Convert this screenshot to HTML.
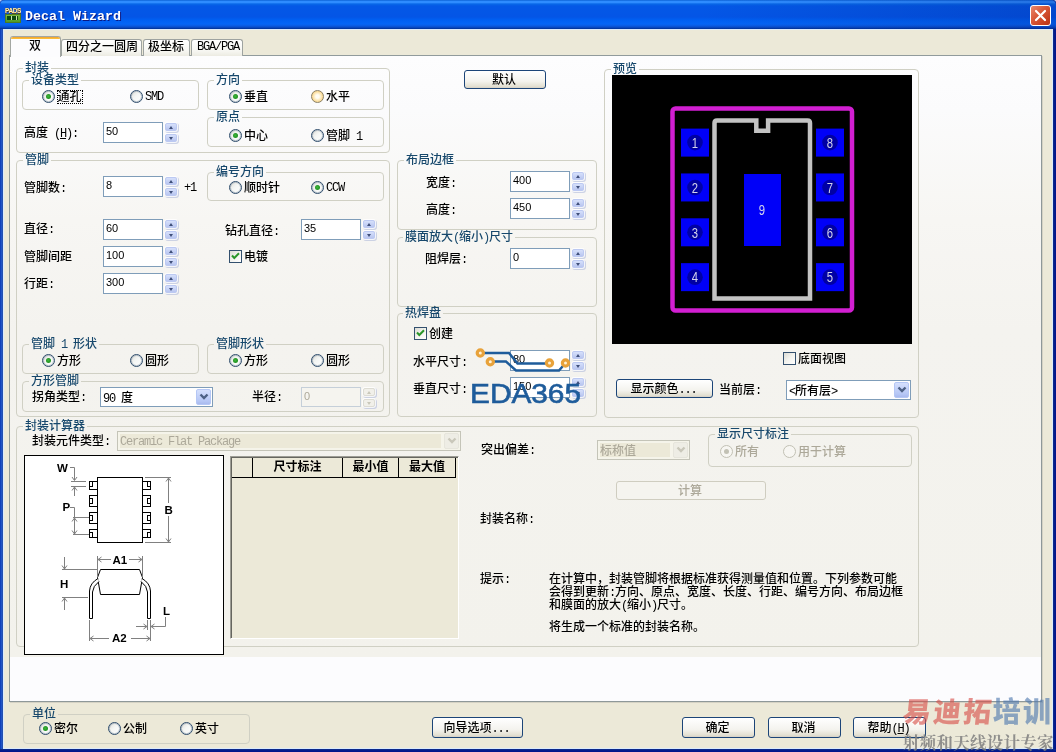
<!DOCTYPE html><html lang="zh-CN"><head><meta charset="utf-8"><title>Decal Wizard</title><style>
*{box-sizing:border-box;margin:0;padding:0}
html,body{width:1056px;height:752px;overflow:hidden;background:#C8DCF8}
body{position:relative;font-family:"Liberation Sans","Noto Sans CJK SC",sans-serif;font-size:12px;color:#000;line-height:12px;font-weight:500;will-change:transform}
.a{position:absolute}
.t{position:absolute;white-space:nowrap;height:12px;line-height:12px;font-size:12px;margin:1px 0 0 -1px}
.m{font-family:"Liberation Mono","Noto Sans CJK SC",monospace;letter-spacing:-1.2px;white-space:pre}
.pg{background:linear-gradient(to bottom,#FDFDFE 0px,#FBFBFC 54px,#F7F6F3 164px,#F4F3EF 274px,#F3F2EC 601px)}
.gb{position:absolute;border:1px solid #D0D0C4;border-radius:4px}
.gl{position:absolute;white-space:nowrap;height:12px;line-height:12px;color:#17486C;padding:0 2px}
.in{position:absolute;border:1px solid #7F9DB9;background:#fff;font-size:11px;line-height:17px;padding-left:2px;white-space:nowrap}
.in.dis{background:#F5F4EF;border-color:#C5CFD9;color:#ACA899}
.sp{position:absolute;width:13px;height:21px}
.sp i{position:absolute;left:0;width:12px;height:8px;border:1px solid #BCC9F2;border-radius:2px;background:linear-gradient(to bottom,#D6E0FB,#B9C6F0);box-shadow:0 0 0 1px rgba(255,255,255,.8),1px 1px 0 1px rgba(170,180,215,.55)}
.sp i:first-child{top:1px}.sp i:last-child{top:12px}
.sp i:before{content:"";position:absolute;left:2.500px;top:1.500px;border-left:2.5px solid transparent;border-right:2.5px solid transparent}
.sp i:first-child:before{border-bottom:3px solid #3F4F7A}
.sp i:last-child:before{border-top:3px solid #3F4F7A}
.sp.dis i{background:#F1F0EA;border-color:#DDDCD3}
.sp.dis i:first-child:before{border-bottom-color:#C9C7BA}
.sp.dis i:last-child:before{border-top-color:#C9C7BA}
.rd{position:absolute;width:13px;height:13px;border-radius:50%;border:1px solid #2F4D6C;box-shadow:inset 0 0 0 1px rgba(47,77,108,.28);background:linear-gradient(135deg,#DCDCD6 0%,#F4F6F4 45%,#FFFFFF 100%)}
.rd.on:after{content:"";position:absolute;left:3px;top:3px;width:5px;height:5px;border-radius:50%;background:radial-gradient(circle at 45% 45%,#3FB83C,#229322 60%,#5DBF5A 100%)}
.rd.hot{background:radial-gradient(circle,#FFFDF4 22%,#FCE4AC 55%,#F2BE5E 100%);border-color:#8A8166;box-shadow:none}
.rd.dis{border-color:#C2C1B4;background:#F7F6F2;box-shadow:none}
.rd.dis.on:after{background:#C2C1B4}
.cb{position:absolute;width:13px;height:13px;border:1px solid #33506E;background:linear-gradient(135deg,#DBDBD4 0%,#F3F3EF 50%,#FFFFFF 100%)}
.btn{position:absolute;border:1px solid #1C4578;border-radius:3px;background:linear-gradient(to bottom,#FFFFFF 0%,#F4F3EE 60%,#E3E0D2 90%,#D6D0C5 100%);text-align:center;white-space:nowrap;font-size:12px;line-height:20px;padding-right:2px}
.btn.dis{border-color:#CFCDC0;background:#F5F4EF;color:#ACA899}
.cmb{position:absolute;border:1px solid #7F9DB9;background:#fff;line-height:17px;padding-left:2px;padding-top:2px;white-space:nowrap}
.cmb b{position:absolute;right:1px;top:1px;bottom:1px;width:15px;border:1px solid #B5C7F5;border-radius:2px;background:linear-gradient(to bottom,#D5E0FD,#B5C6F5 80%,#A9BAEE)}
.cmb b svg{position:absolute;left:1.500px;top:3px}
.cmb.dis{background:linear-gradient(#ECE9D8,#ECE9D8) 2px 2px / calc(100% - 21px) calc(100% - 4px) no-repeat,#F5F4EA;border-color:#C4C4B8;color:#ACA899;padding-top:2px}
.cmb.dis b{background:#EEEDE5;border-color:#E6E5DC}
.tab{position:absolute;top:39px;height:17px;border:1px solid #9EA3A0;border-bottom:none;border-radius:3px 3px 0 0;background:linear-gradient(to bottom,#FFFFFF,#F6F6F1 70%,#ECEBE2);line-height:15px;white-space:nowrap;padding-left:5px}
</style></head><body>
<div class="a" style="left:0;top:0;width:1056px;height:752px;background:#00138C;border-radius:5px 5px 0 0"></div>
<div class="a" style="left:0;top:0;width:3px;height:752px;border-radius:5px 0 0 0;background:linear-gradient(to right,#0838B4,#2A5FCB 70%,#1C3E90)"></div>
<div class="a" style="left:1053px;top:0;width:3px;height:752px;border-radius:0 5px 0 0;background:linear-gradient(to right,#10308A,#041C8C 50%,#00138C)"></div>
<div class="a" style="left:0;top:749px;width:1056px;height:3px;background:linear-gradient(to bottom,#10308A,#041C8C 50%,#00138C)"></div>
<div class="a" style="left:0;top:0;width:1056px;height:29px;border-radius:5px 5px 0 0;background:linear-gradient(to bottom,#0054C8 0px,#2E8CFF 1px,#2E8CFF 2.500px,#0868E8 4px,#0458E6 6px,#0455E6 17px,#0060F2 20px,#0566F6 24px,#0A5AE0 26px,#0848C0 27.500px,#002F90 29px)"></div>
<div class="a" style="left:700px;top:0;width:356px;height:29px;border-radius:0 5px 0 0;background:linear-gradient(to right,rgba(0,20,120,0),rgba(0,20,120,.22))"></div>
<div class="a" style="left:3px;top:29px;width:1050px;height:720px;background:#ECE9D8;border:1px solid #DCEBFB"></div>
<div class="a" style="left:5px;top:7px;width:16px;height:16px;overflow:hidden"><div class="a" style="left:0;top:0;width:16px;height:7px;color:#FFF0B4;font:bold 6.500px/7px 'Liberation Sans',sans-serif;letter-spacing:-.4px;text-align:center;text-shadow:0 0 1px #6A4A10,0 1px 0 #6A4A10">PADS</div><div class="a" style="left:0;top:7px;width:16px;height:9px;background:linear-gradient(to bottom,#7DBA3C,#4E9A28);border:1px solid #4C7A22"></div><div class="a" style="left:2px;top:9px;width:11px;height:4px;background:#0C4A10"></div><div class="a" style="left:6px;top:9px;width:1px;height:4px;background:#CFE8B0"></div><div class="a" style="left:11px;top:9px;width:1px;height:4px;background:#CFE8B0"></div></div>
<div class="a" style="left:25px;top:9px;height:16px;line-height:16px;font:bold 13.33px/16px 'Liberation Mono',monospace;color:#fff;text-shadow:1px 1px 0 #0A1883;white-space:nowrap">Decal Wizard</div>
<div class="a" style="left:1030px;top:5px;width:21px;height:21px;border:1px solid #fff;border-radius:3px;background:linear-gradient(135deg,#E9896E 0%,#DA5B3B 40%,#C53E1F 80%,#B7351A 100%)"><svg class="a" style="left:0;top:0" width="19" height="19" viewBox="0 0 19 19"><path d="M5 5 L14 14 M14 5 L5 14" stroke="#fff" stroke-width="2.2" stroke-linecap="round"/></svg></div>
<div class="a" style="left:9px;top:55px;width:1033px;height:647px;border:1px solid #919B9C;border-right-color:#8E9899;border-bottom-color:#8E9899;background:#FCFCFE;box-shadow:1px 1px 0 #D5D2C4"></div>
<div class="a pg" style="left:10px;top:56px;width:1031px;height:601px"></div>
<div class="tab" style="left:61px;width:81px;padding-left:4px">四分之一圆周</div>
<div class="tab" style="left:143px;width:47px;padding-left:4px">极坐标</div>
<div class="tab m" style="left:191px;width:52px;padding-left:5px">BGA/PGA</div>
<div class="a" style="left:10px;top:36px;width:51px;height:21px;border:1px solid #A3A7A3;border-bottom:none;border-radius:3px 3px 0 0;background:#FCFCFE;overflow:hidden"><div class="a" style="left:-1px;top:-1px;width:51px;height:3px;background:linear-gradient(to bottom,#E68B2C,#FFC73C);border-radius:3px 3px 0 0"></div><div class="t" style="left:19px;top:2px">双</div></div>
<div class="gb" style="left:16px;top:68px;width:374px;height:85px"></div>
<div class="gl" style="left:23px;top:62px;background:#FDFDFE">封装</div>
<div class="gb" style="left:22px;top:80px;width:177px;height:30px"></div>
<div class="gl" style="left:29px;top:74px;background:#FCFCFD">设备类型</div>
<div class="rd on" style="left:42px;top:90px"></div>
<div class="a" style="left:56.5px;top:89.5px;width:26.500px;height:14.500px;border:1px dotted #000"></div>
<div class="t " style="left:58.5px;top:90px;">通孔</div>
<div class="rd" style="left:130px;top:90px"></div>
<div class="t m" style="left:146px;top:90px;">SMD</div>
<div class="t " style="left:25px;top:126px;">高度<span class="m"> (<u>H</u>):</span></div>
<div class="in" style="left:103px;top:122px;width:60px;height:21px">50</div>
<div class="sp" style="left:165px;top:122px"><i></i><i></i></div>
<div class="gb" style="left:207px;top:80px;width:177px;height:30px"></div>
<div class="gl" style="left:214px;top:74px;background:#FCFCFD">方向</div>
<div class="rd on" style="left:229px;top:90px"></div>
<div class="t " style="left:245px;top:90px;">垂直</div>
<div class="rd hot" style="left:311px;top:90px"></div>
<div class="t " style="left:327px;top:90px;">水平</div>
<div class="gb" style="left:207px;top:117px;width:177px;height:30px"></div>
<div class="gl" style="left:214px;top:111px;background:#FBFBFB">原点</div>
<div class="rd on" style="left:229px;top:129px"></div>
<div class="t " style="left:245px;top:129px;">中心</div>
<div class="rd" style="left:311px;top:129px"></div>
<div class="t " style="left:327px;top:129px;">管脚<span class="m"> 1</span></div>
<div class="gb" style="left:16px;top:160px;width:374px;height:257px"></div>
<div class="gl" style="left:23px;top:154px;background:#F9F9F8">管脚</div>
<div class="t " style="left:25px;top:181px;">管脚数<span class="m">:</span></div>
<div class="in" style="left:103px;top:176px;width:60px;height:21px">8</div>
<div class="sp" style="left:165px;top:176px"><i></i><i></i></div>
<div class="t m" style="left:185px;top:181px;">+1</div>
<div class="gb" style="left:207px;top:172px;width:177px;height:29px"></div>
<div class="gl" style="left:214px;top:166px;background:#F9F8F7">编号方向</div>
<div class="rd" style="left:229px;top:181px"></div>
<div class="t " style="left:245px;top:181px;">顺时针</div>
<div class="rd on" style="left:311px;top:181px"></div>
<div class="t m" style="left:327px;top:181px;">CCW</div>
<div class="t " style="left:25px;top:222px;">直径<span class="m">:</span></div>
<div class="in" style="left:103px;top:219px;width:60px;height:21px">60</div>
<div class="sp" style="left:165px;top:219px"><i></i><i></i></div>
<div class="t " style="left:226px;top:224px;">钻孔直径<span class="m">:</span></div>
<div class="in" style="left:301px;top:219px;width:60px;height:21px">35</div>
<div class="sp" style="left:363px;top:219px"><i></i><i></i></div>
<div class="t " style="left:25px;top:250px;">管脚间距</div>
<div class="in" style="left:103px;top:246px;width:60px;height:21px">100</div>
<div class="sp" style="left:165px;top:246px"><i></i><i></i></div>
<div class="cb" style="left:229px;top:250px"><svg class="a" style="left:0;top:0" width="11" height="11" viewBox="0 0 11 11"><path d="M2 4.5 L4.3 7 L9 2.2" fill="none" stroke="#2A962A" stroke-width="2"/></svg></div>
<div class="t " style="left:245px;top:250px;">电镀</div>
<div class="t " style="left:25px;top:277px;">行距<span class="m">:</span></div>
<div class="in" style="left:103px;top:273px;width:60px;height:21px">300</div>
<div class="sp" style="left:165px;top:273px"><i></i><i></i></div>
<div class="gb" style="left:22px;top:344px;width:177px;height:30px"></div>
<div class="gl" style="left:29px;top:338px;background:#F4F3EF">管脚<span class="m"> 1 </span>形状</div>
<div class="rd on" style="left:42px;top:354px"></div>
<div class="t " style="left:58px;top:354px;">方形</div>
<div class="rd" style="left:130px;top:354px"></div>
<div class="t " style="left:146px;top:354px;">圆形</div>
<div class="gb" style="left:207px;top:344px;width:177px;height:30px"></div>
<div class="gl" style="left:214px;top:338px;background:#F4F3EF">管脚形状</div>
<div class="rd on" style="left:229px;top:354px"></div>
<div class="t " style="left:245px;top:354px;">方形</div>
<div class="rd" style="left:311px;top:354px"></div>
<div class="t " style="left:327px;top:354px;">圆形</div>
<div class="gb" style="left:22px;top:381px;width:362px;height:31px"></div>
<div class="gl" style="left:29px;top:375px;background:#F4F3EF">方形管脚</div>
<div class="t " style="left:33px;top:390px;">拐角类型<span class="m">:</span></div>
<div class="cmb" style="left:100px;top:387px;width:113px;height:20px"><span class="m">90 </span>度<b><svg width="10" height="8" viewBox="0 0 10 8"><path d="M1.5 1.5 L5 5 L8.5 1.5" fill="none" stroke="#4D6185" stroke-width="2.400"/></svg></b></div>
<div class="t " style="left:253px;top:390px;">半径<span class="m">:</span></div>
<div class="in dis" style="left:301px;top:387px;width:60px;height:20px">0</div>
<div class="sp dis" style="left:363px;top:387px"><i></i><i></i></div>
<div class="btn" style="left:464px;top:70px;width:82px;height:19px;line-height:18px">默认</div>
<div class="gb" style="left:397px;top:160px;width:200px;height:70px"></div>
<div class="gl" style="left:404px;top:154px;background:#F9F9F8">布局边框</div>
<div class="t " style="left:427px;top:176px;">宽度<span class="m">:</span></div>
<div class="in" style="left:510px;top:171px;width:60px;height:21px">400</div>
<div class="sp" style="left:572px;top:171px"><i></i><i></i></div>
<div class="t " style="left:427px;top:203px;">高度<span class="m">:</span></div>
<div class="in" style="left:510px;top:198px;width:60px;height:21px">450</div>
<div class="sp" style="left:572px;top:198px"><i></i><i></i></div>
<div class="gb" style="left:397px;top:237px;width:200px;height:70px"></div>
<div class="gl" style="left:403px;top:231px;background:#F7F6F2">膜面放大<span class="m">(</span>缩小<span class="m">)</span>尺寸</div>
<div class="t " style="left:426px;top:252px;">阻焊层<span class="m">:</span></div>
<div class="in" style="left:510px;top:248px;width:60px;height:21px">0</div>
<div class="sp" style="left:572px;top:248px"><i></i><i></i></div>
<div class="gb" style="left:397px;top:313px;width:200px;height:104px"></div>
<div class="gl" style="left:403px;top:307px;background:#F4F3F0">热焊盘</div>
<div class="cb" style="left:414px;top:327px"><svg class="a" style="left:0;top:0" width="11" height="11" viewBox="0 0 11 11"><path d="M2 4.5 L4.3 7 L9 2.2" fill="none" stroke="#2A962A" stroke-width="2"/></svg></div>
<div class="t " style="left:430px;top:327px;">创建</div>
<div class="t " style="left:414px;top:355px;">水平尺寸<span class="m">:</span></div>
<div class="in" style="left:510px;top:350px;width:60px;height:21px">80</div>
<div class="sp" style="left:572px;top:350px"><i></i><i></i></div>
<div class="t " style="left:414px;top:382px;">垂直尺寸<span class="m">:</span></div>
<div class="in" style="left:510px;top:377px;width:60px;height:21px">150</div>
<div class="sp" style="left:572px;top:377px"><i></i><i></i></div>
<svg class="a" style="left:470px;top:345px" width="120" height="62" viewBox="0 0 120 62"><g fill="none" stroke="#1E5C9B" stroke-width="2.400"><path d="M10 8 H39 L47.5 18.5 H79"/><path d="M20 16.5 H36 L46 25.5 H89 L95.5 18"/></g><g fill="#FFF1D6" stroke="#E8A23A" stroke-width="3.200"><circle cx="10.300" cy="8" r="3.100"/><circle cx="20.300" cy="16.800" r="3.100"/><circle cx="79.500" cy="18" r="3.100"/><circle cx="95.500" cy="18" r="3.100"/></g><text x="0" y="57.800" font-family="Liberation Sans,sans-serif" font-size="28" fill="#1E5C9B" stroke="#1E5C9B" stroke-width=".600" textLength="111" lengthAdjust="spacingAndGlyphs">EDA365</text></svg>
<div class="gb" style="left:604px;top:69px;width:315px;height:349px"></div>
<div class="gl" style="left:611px;top:63px;background:#FDFDFE">预览</div>
<svg class="a" style="left:612px;top:75px" width="300" height="269" viewBox="0 0 300 269"><rect width="300" height="269" fill="#000"/><rect x="60.5" y="33.500" width="179.5" height="202" rx="3" fill="none" stroke="#D21FD2" stroke-width="4.5"/><path d="M102.5 223.500 V48 Q102.500 45.500 105 45.500 H144.300 V55.700 H156.100 V45.500 H195.500 Q198 45.500 198 48 V223.500 Z" fill="none" stroke="#C3C3C3" stroke-width="4.500"/><rect x="69" y="53.6" width="28" height="28" fill="#0000F8"/><circle cx="83" cy="67.6" r="7.800" fill="#0000A4"/><text x="83" y="72.9" text-anchor="middle" font-family="Liberation Sans,sans-serif" font-size="14.500" textLength="6.300" lengthAdjust="spacingAndGlyphs" fill="#D4D4EC">1</text><rect x="69" y="98.45" width="28" height="28" fill="#0000F8"/><circle cx="83" cy="112.45" r="7.800" fill="#0000A4"/><text x="83" y="117.75" text-anchor="middle" font-family="Liberation Sans,sans-serif" font-size="14.500" textLength="6.300" lengthAdjust="spacingAndGlyphs" fill="#D4D4EC">2</text><rect x="69" y="143.3" width="28" height="28" fill="#0000F8"/><circle cx="83" cy="157.3" r="7.800" fill="#0000A4"/><text x="83" y="162.6" text-anchor="middle" font-family="Liberation Sans,sans-serif" font-size="14.500" textLength="6.300" lengthAdjust="spacingAndGlyphs" fill="#D4D4EC">3</text><rect x="69" y="188.15" width="28" height="28" fill="#0000F8"/><circle cx="83" cy="202.15" r="7.800" fill="#0000A4"/><text x="83" y="207.45" text-anchor="middle" font-family="Liberation Sans,sans-serif" font-size="14.500" textLength="6.300" lengthAdjust="spacingAndGlyphs" fill="#D4D4EC">4</text><rect x="204" y="53.6" width="28" height="28" fill="#0000F8"/><circle cx="218" cy="67.6" r="7.800" fill="#0000A4"/><text x="218" y="72.9" text-anchor="middle" font-family="Liberation Sans,sans-serif" font-size="14.500" textLength="6.300" lengthAdjust="spacingAndGlyphs" fill="#D4D4EC">8</text><rect x="204" y="98.45" width="28" height="28" fill="#0000F8"/><circle cx="218" cy="112.45" r="7.800" fill="#0000A4"/><text x="218" y="117.75" text-anchor="middle" font-family="Liberation Sans,sans-serif" font-size="14.500" textLength="6.300" lengthAdjust="spacingAndGlyphs" fill="#D4D4EC">7</text><rect x="204" y="143.3" width="28" height="28" fill="#0000F8"/><circle cx="218" cy="157.3" r="7.800" fill="#0000A4"/><text x="218" y="162.6" text-anchor="middle" font-family="Liberation Sans,sans-serif" font-size="14.500" textLength="6.300" lengthAdjust="spacingAndGlyphs" fill="#D4D4EC">6</text><rect x="204" y="188.15" width="28" height="28" fill="#0000F8"/><circle cx="218" cy="202.15" r="7.800" fill="#0000A4"/><text x="218" y="207.45" text-anchor="middle" font-family="Liberation Sans,sans-serif" font-size="14.500" textLength="6.300" lengthAdjust="spacingAndGlyphs" fill="#D4D4EC">5</text><rect x="132" y="99" width="37" height="72" fill="#0000F8"/><text x="150" y="140" text-anchor="middle" font-family="Liberation Sans,sans-serif" font-size="14.500" textLength="6.300" lengthAdjust="spacingAndGlyphs" fill="#D4D4EC">9</text></svg>
<div class="cb" style="left:783px;top:352px"></div>
<div class="t " style="left:799px;top:352px;">底面视图</div>
<div class="btn" style="left:616px;top:379px;width:97px;height:19px;line-height:18px">显示颜色<span class="m">...</span></div>
<div class="t " style="left:720px;top:383px;">当前层<span class="m">:</span></div>
<div class="cmb" style="left:786px;top:380px;width:125px;height:20px"><span class="m">&lt;</span>所有层<span class="m">&gt;</span><b><svg width="10" height="8" viewBox="0 0 10 8"><path d="M1.5 1.5 L5 5 L8.5 1.5" fill="none" stroke="#4D6185" stroke-width="2.400"/></svg></b></div>
<div class="gb" style="left:16px;top:426px;width:903px;height:221px"></div>
<div class="gl" style="left:23px;top:420px;background:#F4F3EE">封装计算器</div>
<div class="t " style="left:33px;top:434px;">封装元件类型<span class="m">:</span></div>
<div class="cmb dis m" style="left:117px;top:431px;width:344px;height:20px">Ceramic Flat Package<b><svg width="10" height="8" viewBox="0 0 10 8"><path d="M1.5 1.5 L5 5 L8.5 1.5" fill="none" stroke="#C9C7BA" stroke-width="2.400"/></svg></b></div>
<svg class="a" style="left:24px;top:455px" width="200" height="200" viewBox="0 0 200 200"><rect x=".5" y=".5" width="199" height="199" fill="#fff" stroke="#000"/><g fill="#fff" stroke="#000" stroke-width="1"><rect x="73.500" y="22.500" width="45" height="65"/><rect x="65.500" y="26.5" width="8" height="8"/><rect x="65.500" y="26.5" width="3" height="5"/><rect x="118.500" y="26.5" width="8" height="8"/><rect x="123.500" y="26.5" width="3" height="5"/><rect x="65.500" y="40.5" width="8" height="11"/><rect x="65.500" y="43.5" width="3" height="5"/><rect x="118.500" y="40.5" width="8" height="11"/><rect x="123.500" y="43.5" width="3" height="5"/><rect x="65.500" y="57.5" width="8" height="11"/><rect x="65.500" y="60.5" width="3" height="5"/><rect x="118.500" y="57.5" width="8" height="11"/><rect x="123.500" y="60.5" width="3" height="5"/><rect x="65.500" y="74.5" width="8" height="8"/><rect x="65.500" y="77.5" width="3" height="5"/><rect x="118.500" y="74.5" width="8" height="8"/><rect x="123.500" y="77.5" width="3" height="5"/><path d="M76.500 114.500 H115.500 L118.500 122.500 L115.500 139.500 H76.500 L73.500 122.500 Z"/><path d="M74 123.500 Q66 128 65.500 136 V163.500 H68.500 V137 Q69 131 75 126.500"/><path d="M118 123.500 Q126 128 126.500 136 V163.500 H123.500 V137 Q123 131 117 126.500"/></g><g fill="none" stroke="#808080" stroke-width="1"><path d="M46 12.500 H50.500 V25 M48 22 L50.500 25.500 L53 22 M47 26.500 H62 M47 31.500 H62 M50.500 32 V41 M48 35.500 L50.500 32 L53 35.500"/><path d="M46 52.500 H50.500 V62 M49 62.500 H65 M50.500 63 V79 M48 66.500 L50.500 63 L53 66.500 M48 75.500 L50.500 79 L53 75.500 M49 79.500 H65"/><path d="M121 22.500 H147 M121 87.500 H147 M144.500 23 V48 M144.500 61 V87 M142 26.500 L144.500 23 L147 26.500 M142 83.500 L144.500 87 L147 83.500"/><path d="M73.500 101 V122 M118.500 101 V122 M74 104.500 H87 M105 104.500 H118 M77.500 102 L74 104.500 L77.500 107 M114.500 102 L118 104.500 L114.500 107"/><path d="M40.500 102 V114 M38 110.500 L40.500 114 L43 110.500 M38 114.500 H73 M38 142.500 H64 M40.500 143 V155 M38 146.500 L40.500 143 L43 146.500"/><path d="M141.500 162 V171.500 H127 M130.500 169 L127 171.500 L130.500 174 M112 171.500 H123 M119.500 169 L123 171.500 L119.500 174 M123.500 165 V175 M126.500 165 V175"/><path d="M65.500 165 V186 M126.500 165 V186 M66 183.500 H85 M107 183.500 H126 M69.500 181 L66 183.500 L69.500 186 M122.500 181 L126 183.500 L122.500 186"/></g><g font-family="Liberation Sans,sans-serif" font-weight="bold" font-size="11.500" fill="#000"><text x="33" y="17">W</text><text x="38.500" y="56">P</text><text x="140.500" y="59">B</text><text x="88.500" y="108.500">A1</text><text x="36" y="133">H</text><text x="139" y="160">L</text><text x="88" y="187">A2</text></g></svg>
<div class="a" style="left:230px;top:456px;width:229px;height:183px;background:#ECE9D8;border:1px solid #fff;border-left-color:#9D9D95;border-top-color:#9D9D95;box-shadow:inset 1px 1px 0 #66665F"></div>
<div class="a" style="left:232px;top:458px;width:224px;height:20px;border-bottom:1px solid #000;font-weight:bold;font-size:12px;line-height:19px;text-align:center"><div class="a" style="left:0;top:0;width:21px;height:19px;border-right:1px solid #000"></div><div class="a" style="left:21px;top:0;width:90px;height:19px;border-right:1px solid #000">尺寸标注</div><div class="a" style="left:111px;top:0;width:56px;height:19px;border-right:1px solid #000">最小值</div><div class="a" style="left:167px;top:0;width:57px;height:19px;border-right:1px solid #000">最大值</div></div>
<div class="t " style="left:482px;top:443px;">突出偏差<span class="m">:</span></div>
<div class="cmb dis" style="left:597px;top:440px;width:93px;height:20px">标称值<b><svg width="10" height="8" viewBox="0 0 10 8"><path d="M1.5 1.5 L5 5 L8.5 1.5" fill="none" stroke="#C9C7BA" stroke-width="2.400"/></svg></b></div>
<div class="gb" style="left:708px;top:434px;width:204px;height:33px"></div>
<div class="gl" style="left:715px;top:428px;background:#F4F3EE">显示尺寸标注</div>
<div class="rd on dis" style="left:720px;top:445px"></div>
<div class="t " style="left:736px;top:445px;color:#ACA899;">所有</div>
<div class="rd dis" style="left:783px;top:445px"></div>
<div class="t " style="left:799px;top:445px;color:#ACA899;">用于计算</div>
<div class="btn dis" style="left:616px;top:481px;width:150px;height:19px;line-height:18px">计算</div>
<div class="t " style="left:481px;top:512px;">封装名称<span class="m">:</span></div>
<div class="t " style="left:481px;top:572px;">提示<span class="m">:</span></div>
<div class="t " style="left:550px;top:572px;">在计算中，封装管脚将根据标准获得测量值和位置。下列参数可能</div>
<div class="t " style="left:550px;top:585px;">会得到更新<span class="m">:</span>方向、原点、宽度、长度、行距、编号方向、布局边框</div>
<div class="t " style="left:550px;top:598px;">和膜面的放大<span class="m">(</span>缩小<span class="m">)</span>尺寸。</div>
<div class="t " style="left:550px;top:620px;">将生成一个标准的封装名称。</div>
<div class="gb" style="left:23px;top:713.5px;width:227px;height:30px"></div>
<div class="gl" style="left:30px;top:707.5px;background:#ECE9D8">单位</div>
<div class="rd on" style="left:39px;top:722px"></div>
<div class="t " style="left:55px;top:722px;">密尔</div>
<div class="rd" style="left:108px;top:722px"></div>
<div class="t " style="left:124px;top:722px;">公制</div>
<div class="rd" style="left:180px;top:722px"></div>
<div class="t " style="left:196px;top:722px;">英寸</div>
<div class="btn" style="left:432px;top:717px;width:91px;height:21px;">向导选项<span class="m">...</span></div>
<div class="btn" style="left:682px;top:717px;width:73px;height:21px;">确定</div>
<div class="btn" style="left:768px;top:717px;width:73px;height:21px;">取消</div>
<div class="btn" style="left:853px;top:717px;width:73px;height:21px;">帮助<span class="m">(<u>H</u>)</span></div>
<div class="a" style="left:902.500px;top:697px;height:32px;line-height:32px;font-size:28px;letter-spacing:2.100px;font-weight:900;font-family:'Liberation Sans','Noto Sans CJK SC',sans-serif;white-space:nowrap;opacity:.62"><span style="color:#D8504A;display:inline-block;transform:skewX(-6deg)">易迪拓</span><span style="color:#4F79AF">培训</span></div>
<div class="a" style="left:903px;top:734.500px;height:17px;line-height:17px;font-size:16.500px;letter-spacing:.250px;font-weight:bold;font-family:'Liberation Serif','Noto Serif CJK SC',serif;white-space:nowrap;color:#7F7F7F;opacity:.85">射频和天线设计专家</div>
</body></html>
